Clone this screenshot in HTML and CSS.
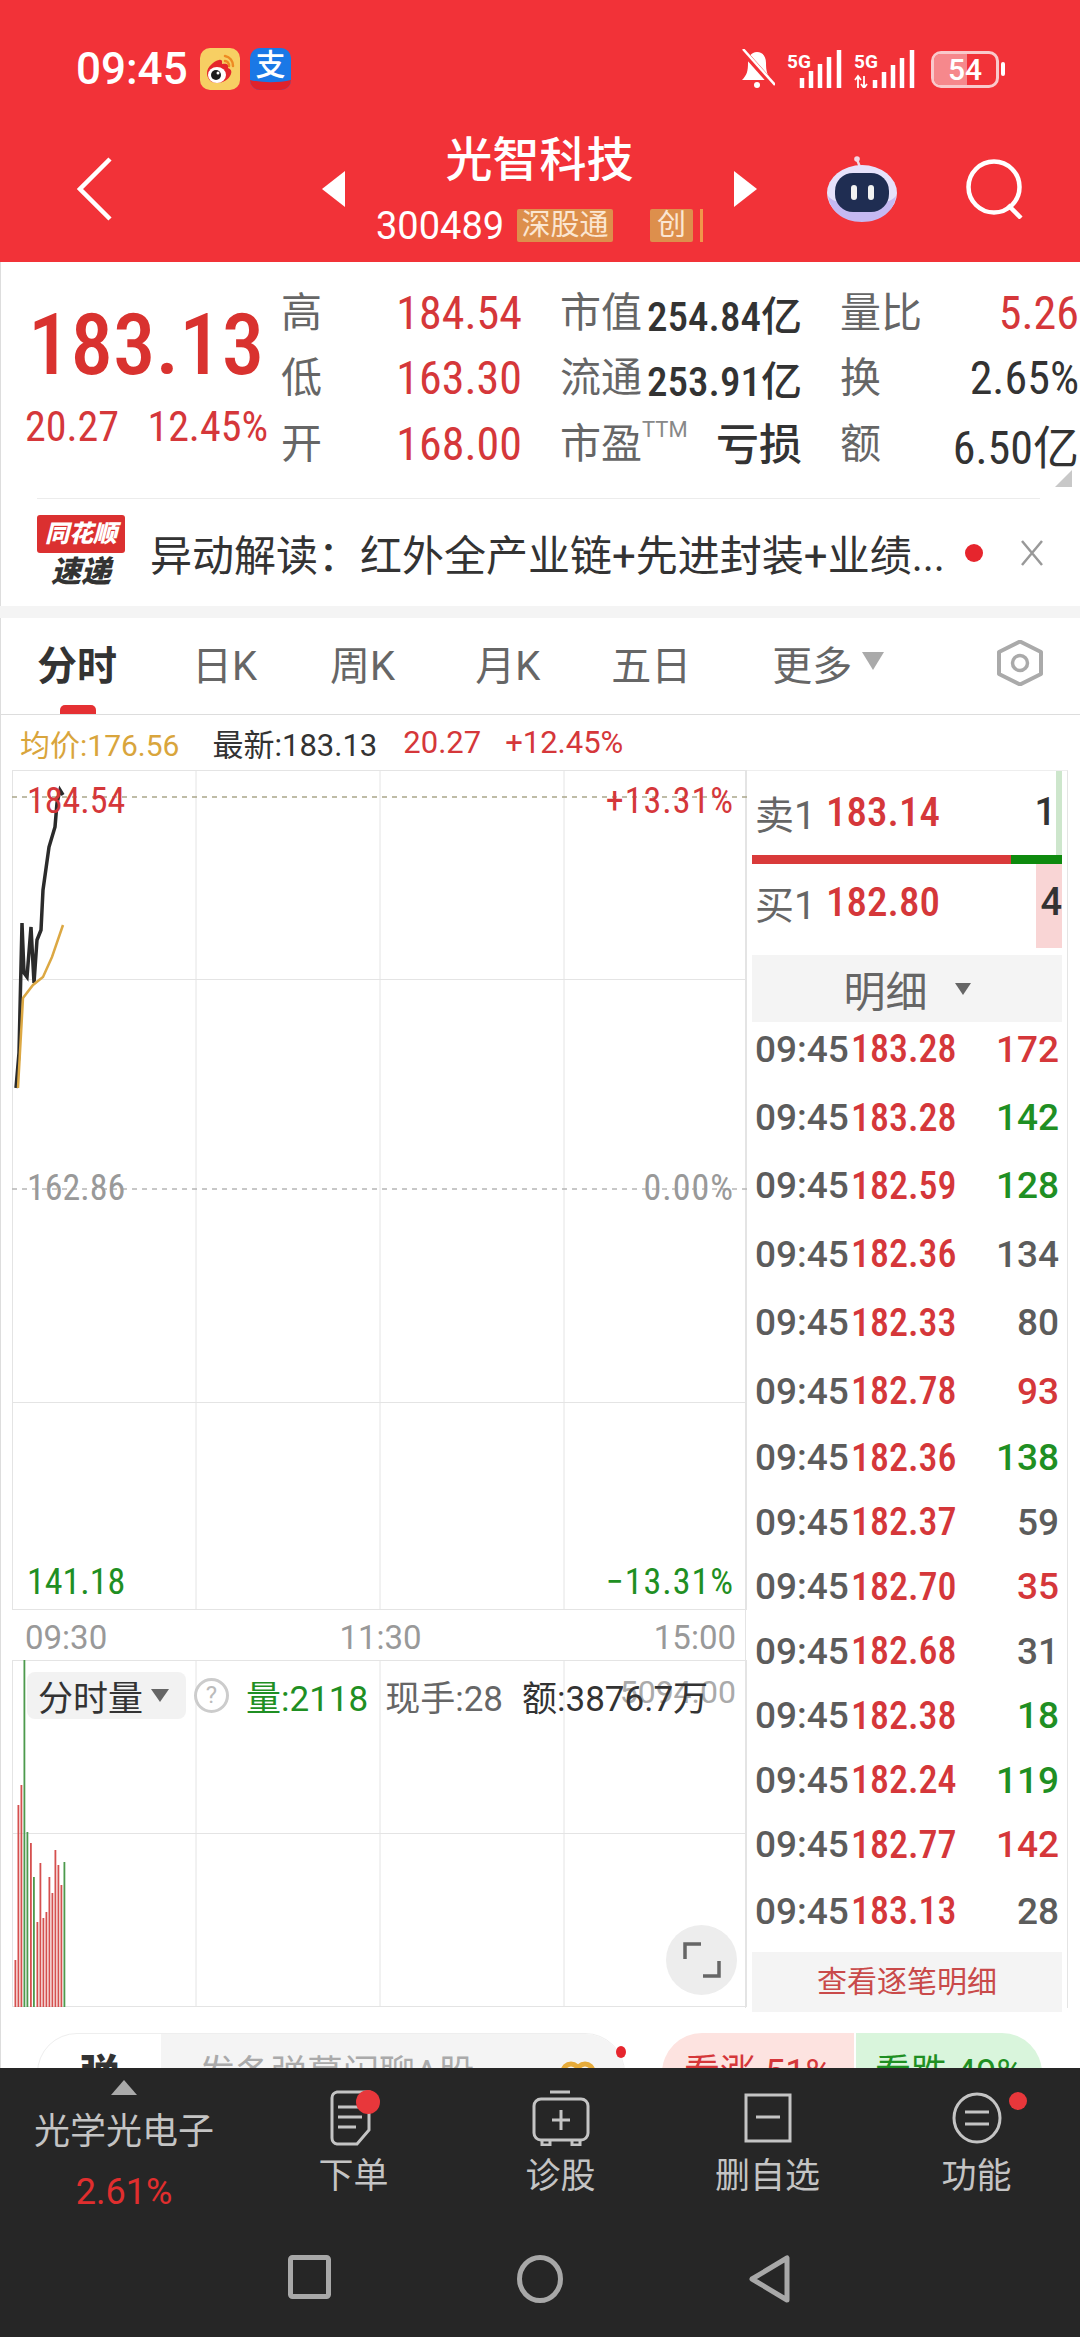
FILE: index.html
```html
<!DOCTYPE html>
<html lang="zh">
<head>
    <meta charset="UTF-8">
    <meta name="viewport" content="width=device-width, initial-scale=1.0">
    <title>光智科技</title>
    <link rel="stylesheet" href="styles.css">
</head>
<body>

<header class="header">
    <div class="status">
        <span class="clock">09:45</span>
        <svg class="app-icon weibo" viewBox="0 0 40 42">
            <rect width="40" height="42" rx="10" fill="#f7cf63"/>
            <path d="M25 8c5 1 8 5 8 10M25 13c2 0 4 2 4 5" fill="none" stroke="#ee8a22" stroke-width="2.5" stroke-linecap="round"/>
            <path d="M7 25c0-6 7-12 12-13 4-1 3 3 3 4 4-1 7 0 6 4 3 1 4 3 3 6-2 6-9 9-14 9-6 0-10-4-10-10z" fill="#e5262c"/>
            <ellipse cx="17" cy="27" rx="9" ry="8" fill="#fff"/>
            <circle cx="16" cy="27" r="5" fill="#1c1c1c"/>
            <circle cx="18" cy="25" r="1.5" fill="#fff"/>
        </svg>
        <svg class="app-icon alipay" viewBox="0 0 41 42">
            <rect width="41" height="42" rx="10" fill="#1a78e6"/>
            <path d="M0 32c12 3 29 3 41 0v0a10 10 0 0 1-10 10H10A10 10 0 0 1 0 32z" fill="#e0222c"/>
            <text x="20.5" y="27" text-anchor="middle" class="alipay-glyph">支</text>
        </svg>
        <div class="status-right">
            <svg class="bell" viewBox="0 0 36 40">
                <path d="M18 3c-6 0-9 5-9 11 0 8-1 12-6 17h30c-5-5-6-9-6-17 0-6-3-11-9-11z" fill="#fff"/>
                <circle cx="18" cy="36" r="3" fill="#fff"/>
                <path d="M3 1l31 35" stroke="#f23238" stroke-width="6"/>
                <path d="M4 0l32 36" stroke="#fff" stroke-width="2.5"/>
            </svg>
            <svg class="signal" viewBox="0 0 55 38">
                <text x="0" y="18" class="sig-text">5G</text>
                <path d="M15 38V28M24 38V21M33 38V14M42 38V7M52 38V0" stroke="#fff" stroke-width="4.5"/>
            </svg>
            <svg class="signal second" viewBox="0 0 61 38">
                <text x="0" y="18" class="sig-text">5G</text>
                <path d="M4 38V26M1 30l3-4 3 4M10 26v12M7 34l3 4 3-4" stroke="#fff" stroke-width="1.8" fill="none"/>
                <path d="M21 38V30M30 38V22M39 38V15M48 38V8M58 38V0" stroke="#fff" stroke-width="4.5"/>
            </svg>
            <div class="battery"><span class="battery-fill"></span><span class="battery-num">54</span></div>
            <span class="battery-tip"></span>
        </div>
    </div>
    <div class="nav">
        <svg class="nav-back" viewBox="0 0 35 64"><path d="M33 2L3 32l30 30" fill="none" stroke="#fff" stroke-width="4.5"/></svg>
        <span class="tri-left"></span>
        <div class="nav-mid">
            <div class="stock-name">光智科技</div>
            <div class="code-row">
                <span class="code">300489</span>
                <span class="tag tag-sgt">深股通</span>
                <span class="tag tag-chuang">创</span>
                <span class="tag-more"></span>
            </div>
        </div>
        <span class="tri-right"></span>
        <svg class="robot" viewBox="0 0 72 66">
            <path d="M34 12C33 7 31 5 31 3" stroke="#f3d8e4" stroke-width="2.5" fill="none"/>
            <circle cx="31" cy="3" r="2.8" fill="#f3d8e4"/>
            <ellipse cx="36" cy="37" rx="35" ry="28" fill="#e6e2fb"/>
            <path d="M2 40c2 14 14 26 34 26 19 0 32-11 34-26-8 12-60 12-68 0z" fill="#c5b9f2"/>
            <rect x="9" y="17" width="54" height="39" rx="18" fill="#1f2d52"/>
            <rect x="25" y="29" width="6" height="15" rx="3" fill="#f2f2f2"/>
            <rect x="42" y="29" width="6" height="15" rx="3" fill="#f2f2f2"/>
        </svg>
        <svg class="search" viewBox="0 0 59 60">
            <circle cx="28" cy="28" r="25.5" fill="none" stroke="#fff" stroke-width="4.5"/>
            <path d="M42 46l13 13" stroke="#fff" stroke-width="4.5"/>
        </svg>
    </div>
</header>

<div class="content">
    <section class="quote">
        <div class="price-box">
            <div class="price">183.13</div>
            <div class="change"><span>20.27</span><span>12.45%</span></div>
        </div>
        <div class="stats">
            <div class="stat"><span class="lbl">高</span><span class="val up">184.54</span></div>
            <div class="stat"><span class="lbl">市值</span><span class="val small">254.84亿</span></div>
            <div class="stat"><span class="lbl">量比</span><span class="val up">5.26</span></div>
            <div class="stat"><span class="lbl">低</span><span class="val up">163.30</span></div>
            <div class="stat"><span class="lbl">流通</span><span class="val small">253.91亿</span></div>
            <div class="stat"><span class="lbl">换</span><span class="val">2.65%</span></div>
            <div class="stat"><span class="lbl">开</span><span class="val up">168.00</span></div>
            <div class="stat"><span class="lbl">市盈<sup class="ttm">TTM</sup></span><span class="val loss">亏损</span></div>
            <div class="stat"><span class="lbl">额</span><span class="val">6.50亿</span></div>
        </div>
        <span class="corner"></span>
    </section>

    <section class="news">
        <div class="news-logo">
            <div class="logo-top">同花顺</div>
            <div class="logo-bottom">速递</div>
        </div>
        <div class="news-text">异动解读：红外全产业链+先进封装+业绩...</div>
        <span class="news-dot"></span>
        <svg class="news-close" viewBox="0 0 24 26"><path d="M2 1l20 24M22 1L2 25" stroke="#999" stroke-width="2.5"/></svg>
    </section>

    <nav class="tabs">
        <span class="tab active">分时</span>
        <span class="tab">日K</span>
        <span class="tab">周K</span>
        <span class="tab">月K</span>
        <span class="tab">五日</span>
        <span class="tab">更多<i class="tab-arrow"></i></span>
        <svg class="hex" viewBox="0 0 48 46">
            <path d="M24 1.5L45 12v22L24 44.5 3 34V12z" fill="none" stroke="#aaa" stroke-width="4" stroke-linejoin="round"/>
            <circle cx="24" cy="23" r="7.5" fill="none" stroke="#aaa" stroke-width="3.5"/>
        </svg>
    </nav>

    <div class="info">
        <span class="avg">均价:176.56</span>
        <span class="latest">最新:183.13</span>
        <span class="up">20.27</span>
        <span class="up">+12.45%</span>
    </div>

    <div class="main">
        <div class="charts">
            <div class="price-chart">
                <svg class="chart-svg" viewBox="12 770 735 840">
                    <path class="grid" d="M12.5 770V1610M196 770V1610M380 770V1610M564 770V1610M746.5 770V1610M12 770.5H747M12 979.5H747M12 1402.5H747M12 1609.5H747"/>
                    <path d="M12 797H747" stroke="#aaa68a" stroke-width="1.5" stroke-dasharray="5 5"/>
                    <path d="M12 1189H747" stroke="#b5b5b5" stroke-width="1.5" stroke-dasharray="5 5"/>
                    <polyline points="16,1088 19,1053 22,923 24,973 27,977 31,927 34,983 37,940 41,930 43,890 49,847 55,827 57,803 60,790 63,795" fill="none" stroke="#2b2b2b" stroke-width="3.5"/>
                    <polyline points="18,1088 23,998 33,985 43,977 52,957 63,925" fill="none" stroke="#dca843" stroke-width="2.5"/>
                </svg>
                <span class="ch-label ch-l1 up">184.54</span>
                <span class="ch-label ch-r1 up">+13.31%</span>
                <span class="ch-label ch-l2 muted">162.86</span>
                <span class="ch-label ch-r2 muted">0.00%</span>
                <span class="ch-label ch-l3 down">141.18</span>
                <span class="ch-label ch-r3 down">−13.31%</span>
            </div>
            <div class="time-axis"><span>09:30</span><span>11:30</span><span>15:00</span></div>
            <div class="vol-chart">
                <svg class="chart-svg" viewBox="12 1660 735 347">
                    <path class="grid" d="M12.5 1660V2007M196 1660V2007M380 1660V2007M564 1660V2007M746.5 1660V2007M12 1660.5H747M12 1833.5H747M12 2006.5H747"/>
                    <g class="bar-red">
                        <rect x="14.5" y="1960" width="1.8" height="47"/>
                        <rect x="17.5" y="1805" width="1.8" height="202"/>
                        <rect x="20.5" y="1785" width="1.8" height="222"/>
                        <rect x="30" y="1843" width="1.8" height="164"/>
                        <rect x="36.5" y="1922" width="1.8" height="85"/>
                        <rect x="39.5" y="1863" width="1.8" height="144"/>
                        <rect x="42.5" y="1918" width="1.8" height="89"/>
                        <rect x="45.5" y="1912" width="1.8" height="95"/>
                        <rect x="48.5" y="1877" width="1.8" height="130"/>
                        <rect x="51.5" y="1893" width="1.8" height="114"/>
                        <rect x="54.5" y="1850" width="1.8" height="157"/>
                        <rect x="57.5" y="1865" width="1.8" height="142"/>
                        <rect x="60.5" y="1885" width="1.8" height="122"/>
                    </g>
                    <g class="bar-green">
                        <rect x="23.5" y="1660" width="1.8" height="347"/>
                        <rect x="26.5" y="1832" width="1.8" height="175"/>
                        <rect x="33" y="1877" width="1.8" height="130"/>
                        <rect x="63.5" y="1862" width="1.8" height="145"/>
                    </g>
                </svg>
                <span class="vol-max">5094.00</span>
                <div class="vol-head">
                    <span class="vol-chip">分时量<i class="chip-arrow"></i></span>
                    <span class="help">?</span>
                    <span class="vol-a down">量:2118</span>
                    <span class="vol-b">现手:28</span>
                    <span class="vol-c">额:3876.7万</span>
                </div>
                <div class="expand">
                    <svg viewBox="0 0 38 36"><path d="M18 2H2v15M20 34h16V19" fill="none" stroke="#666" stroke-width="3.5"/></svg>
                </div>
            </div>
        </div>

        <aside class="side">
            <div class="book sell">
                <span class="book-lbl">卖1</span><span class="book-price">183.14</span><span class="book-vol">1</span>
                <span class="book-bar green-bar"></span>
            </div>
            <div class="ratio"><span class="ratio-red"></span><span class="ratio-green"></span></div>
            <div class="book buy">
                <span class="book-lbl">买1</span><span class="book-price">182.80</span><span class="book-vol">4</span>
                <span class="book-bar red-bar"></span>
            </div>
            <div class="detail-head">明细<i class="detail-arrow"></i></div>
            <div class="ticks">
                <div class="tick tall"><span class="t">09:45</span><span class="p">183.28</span><span class="v up">172</span></div>
                <div class="tick tall"><span class="t">09:45</span><span class="p">183.28</span><span class="v down">142</span></div>
                <div class="tick tall"><span class="t">09:45</span><span class="p">182.59</span><span class="v down">128</span></div>
                <div class="tick tall"><span class="t">09:45</span><span class="p">182.36</span><span class="v">134</span></div>
                <div class="tick tall"><span class="t">09:45</span><span class="p">182.33</span><span class="v">80</span></div>
                <div class="tick tall"><span class="t">09:45</span><span class="p">182.78</span><span class="v up">93</span></div>
                <div class="tick"><span class="t">09:45</span><span class="p">182.36</span><span class="v down">138</span></div>
                <div class="tick"><span class="t">09:45</span><span class="p">182.37</span><span class="v">59</span></div>
                <div class="tick"><span class="t">09:45</span><span class="p">182.70</span><span class="v up">35</span></div>
                <div class="tick"><span class="t">09:45</span><span class="p">182.68</span><span class="v">31</span></div>
                <div class="tick"><span class="t">09:45</span><span class="p">182.38</span><span class="v down">18</span></div>
                <div class="tick"><span class="t">09:45</span><span class="p">182.24</span><span class="v down">119</span></div>
                <div class="tick"><span class="t">09:45</span><span class="p">182.77</span><span class="v up">142</span></div>
                <div class="tick tall"><span class="t">09:45</span><span class="p">183.13</span><span class="v">28</span></div>
            </div>
            <div class="detail-btn">查看逐笔明细</div>
        </aside>
    </div>

    <div class="peek">
        <div class="danmu">
            <span class="danmu-tag">弹</span>
            <span class="danmu-input">发条弹幕闲聊A股</span>
            <svg class="danmu-gift" viewBox="0 0 36 30">
                <circle cx="11" cy="12" r="8" fill="none" stroke="#e6ab3a" stroke-width="5"/>
                <circle cx="25" cy="12" r="8" fill="none" stroke="#e6ab3a" stroke-width="5"/>
            </svg>
            <span class="danmu-dot"></span>
        </div>
        <div class="vote">
            <span class="vote-up">看涨 51%</span>
            <span class="vote-down">看跌 49%</span>
        </div>
    </div>
</div>

<footer class="bottom">
    <div class="actions">
        <div class="sector">
            <span class="sector-arrow"></span>
            <span class="sector-name">光学光电子</span>
            <span class="sector-pct">2.61%</span>
        </div>
        <div class="action">
            <div class="action-icon">
                <svg viewBox="0 0 52 56" width="52" height="56">
                    <path d="M8 2h32v38l-12 14H8a6 6 0 0 1-5-6V8a6 6 0 0 1 5-6z" transform="translate(1 0)" fill="none" stroke="#c4c4c4" stroke-width="3"/>
                    <path d="M10 17h24M10 27h24M10 37h18" stroke="#c4c4c4" stroke-width="3"/>
                </svg>
                <span class="red-dot dot-order"></span>
            </div>
            <span class="action-name">下单</span>
        </div>
        <div class="action">
            <div class="action-icon">
                <svg viewBox="0 0 58 56" width="58" height="56">
                    <path d="M18 2h20" stroke="#c4c4c4" stroke-width="3"/>
                    <rect x="2" y="9" width="54" height="41" rx="7" fill="none" stroke="#c4c4c4" stroke-width="3"/>
                    <path d="M29 20v20M20 30h18" stroke="#c4c4c4" stroke-width="3"/>
                    <path d="M10 50v5h8v-5M40 50v5h8v-5" fill="none" stroke="#c4c4c4" stroke-width="3"/>
                </svg>
            </div>
            <span class="action-name">诊股</span>
        </div>
        <div class="action">
            <div class="action-icon">
                <svg viewBox="0 0 48 50" width="48" height="50">
                    <rect x="2" y="2" width="44" height="46" fill="none" stroke="#c4c4c4" stroke-width="3"/>
                    <path d="M12 24h24" stroke="#c4c4c4" stroke-width="3"/>
                </svg>
            </div>
            <span class="action-name">删自选</span>
        </div>
        <div class="action">
            <div class="action-icon">
                <svg viewBox="0 0 50 52" width="50" height="52">
                    <ellipse cx="25" cy="26" rx="23" ry="24" fill="none" stroke="#c4c4c4" stroke-width="3"/>
                    <path d="M13 20h24M13 32h24" stroke="#c4c4c4" stroke-width="3"/>
                </svg>
                <span class="red-dot dot-func"></span>
            </div>
            <span class="action-name">功能</span>
        </div>
    </div>
    <div class="sysnav">
        <svg viewBox="0 0 43 44" width="43" height="44"><rect x="2.5" y="2.5" width="38" height="39" rx="2" fill="none" stroke="#a8a8a8" stroke-width="5"/></svg>
        <svg viewBox="0 0 46 48" width="46" height="48"><ellipse cx="23" cy="24" rx="20.5" ry="21.5" fill="none" stroke="#a8a8a8" stroke-width="5"/></svg>
        <svg viewBox="0 0 41 48" width="41" height="48"><path d="M38 3v42L3 24z" fill="none" stroke="#a8a8a8" stroke-width="5" stroke-linejoin="round"/></svg>
    </div>
</footer>

</body>
</html>
```

FILE: styles.css
```css
* {
    box-sizing: border-box;
}
html, body {
    margin: 0;
    padding: 0;
}
body {
    width: 1080px;
    height: 2337px;
    overflow: hidden;
    background: #fff;
    font-family: Roboto, "Noto Sans CJK SC", sans-serif;
    color: #333;
}
i {
    display: block;
}
svg {
    display: block;
    flex: none;
}

.up { color: #d5373a; }
.down { color: #1f8f23; }
.muted { color: #999; }

/* red header */
.header {
    height: 262px;
    background: #f23238;
    color: #fff;
    padding-top: 48px;
}
.status {
    display: flex;
    align-items: center;
    height: 42px;
    padding-left: 76px;
}
.clock {
    font-size: 44px;
    font-weight: 500;
    width: 124px;
}
.app-icon {
    width: 40px;
    height: 42px;
}
.alipay {
    width: 41px;
    margin-left: 10px;
}
.alipay-glyph {
    font-size: 30px;
    font-weight: 500;
    fill: #fff;
}
.status-right {
    display: flex;
    align-items: center;
    margin-left: auto;
    padding-right: 75px;
}
.bell {
    width: 36px;
    height: 40px;
}
.signal {
    width: 55px;
    height: 38px;
    margin-left: 12px;
}
.signal.second {
    width: 61px;
}
.sig-text {
    font-size: 19px;
    font-weight: 700;
    fill: #fff;
}
.battery {
    position: relative;
    width: 68px;
    height: 37px;
    margin-left: 16px;
    border: 3px solid #f9c9cb;
    border-radius: 10px;
    text-align: center;
}
.battery-fill {
    position: absolute;
    left: 0;
    top: 0;
    bottom: 0;
    width: 54%;
    border-radius: 6px 0 0 6px;
    background: #f6888c;
}
.battery-num {
    position: relative;
    display: block;
    font-size: 30px;
    font-weight: 500;
    line-height: 31px;
    color: #fff;
}
.battery-tip {
    width: 4px;
    height: 14px;
    margin-left: 2px;
    background: #fff;
    border-radius: 2px;
}
.nav {
    display: flex;
    align-items: center;
    margin-top: 45px;
    padding-left: 77px;
}
.nav-back {
    width: 35px;
    height: 64px;
}
.tri-left,
.tri-right {
    width: 0;
    height: 0;
    border-top: 18px solid transparent;
    border-bottom: 18px solid transparent;
}
.tri-left {
    margin-left: 210px;
    border-right: 23px solid #fff;
}
.tri-right {
    border-left: 23px solid #fff;
}
.nav-mid {
    width: 389px;
    display: flex;
    flex-direction: column;
    align-items: center;
}
.stock-name {
    font-size: 47px;
    font-weight: 500;
    line-height: 54px;
    margin-top: -2px;
    margin-bottom: 2px;
}
.code-row {
    display: flex;
    align-items: center;
    margin-top: 20px;
    height: 33px;
}
.code {
    font-size: 38px;
    width: 141px;
}
.tag {
    height: 33px;
    line-height: 32px;
    font-size: 29px;
    text-align: center;
    background: #dd8f4c;
    color: #fbe6d2;
    border-radius: 2px;
}
.tag-sgt {
    width: 96px;
}
.tag-chuang {
    width: 43px;
    margin-left: 37px;
}
.tag-more {
    width: 3px;
    height: 33px;
    margin-left: 7px;
    background: #f0964a;
}
.robot {
    width: 72px;
    height: 66px;
    margin-left: 69px;
}
.search {
    width: 59px;
    height: 60px;
    margin-left: 68px;
}

/* quote panel */
.content {
    background: #fff;
    box-shadow: inset 1px 0 #ddd;
    height: 1806px;
    overflow: hidden;
}
.quote {
    position: relative;
    display: flex;
    height: 237px;
    padding: 18px 0 0 25px;
}
.quote::after {
    content: "";
    position: absolute;
    left: 37px;
    right: 40px;
    bottom: 0;
    border-bottom: 1px solid #ececec;
}
.price-box {
    width: 256px;
    flex: none;
}
.price {
    margin: 32px 0 0 3px;
    font-size: 85px;
    font-stretch: 75%;
    font-weight: 500;
    line-height: 66px;
    color: #d9322f;
    white-space: nowrap;
}
.change {
    display: flex;
    justify-content: space-between;
    width: 243px;
    margin-top: 24px;
    font-size: 42px;
    font-stretch: 75%;
    color: #d5373a;
}
.stats {
    display: grid;
    grid-template-columns: 241px 242px 239px;
    grid-auto-rows: 65.5px;
    column-gap: 38px;
    flex: none;
}
.stat {
    display: flex;
    justify-content: space-between;
    align-items: center;
}
.lbl {
    position: relative;
    margin-bottom: 8px;
    font-size: 41px;
    color: #666;
    white-space: nowrap;
}
.ttm {
    position: absolute;
    font-size: 22px;
    line-height: 22px;
    top: 9px;
    color: #888;
}
.val {
    font-size: 46px;
    font-stretch: 75%;
    white-space: nowrap;
}
.val.small {
    font-size: 41px;
    font-weight: 500;
}
.val.loss {
    margin-bottom: 6px;
    font-size: 43px;
    font-weight: 500;
}
.corner {
    position: absolute;
    left: 1055px;
    top: 208px;
    width: 0;
    height: 0;
    border-left: 17px solid transparent;
    border-bottom: 17px solid #c8c8c8;
}

/* news row */
.news {
    display: flex;
    align-items: center;
    height: 107px;
    padding-left: 37px;
}
.news-logo {
    width: 88px;
    flex: none;
    text-align: center;
    font-style: italic;
    font-weight: 900;
}
.logo-top {
    height: 38px;
    background: #db3030;
    color: #fff;
    font-size: 24px;
    line-height: 38px;
    border-radius: 3px;
    white-space: nowrap;
}
.logo-bottom {
    margin-top: 1px;
    font-size: 30px;
    line-height: 36px;
    color: #333;
}
.news-text {
    width: 815px;
    margin-left: 25px;
    flex: none;
    font-size: 42px;
    color: #333;
    white-space: nowrap;
}
.news-dot {
    width: 18px;
    height: 18px;
    flex: none;
    border-radius: 50%;
    background: #e6252d;
}
.news-close {
    width: 24px;
    height: 26px;
    margin-left: 37px;
}

/* tabs */
.tabs {
    position: relative;
    display: flex;
    align-items: center;
    height: 109px;
    padding: 0 36px 6px 37px;
    border-top: 12px solid #f4f4f4;
    border-bottom: 1px solid #ddd;
}
.tab {
    display: flex;
    font-size: 40px;
    color: #666;
    margin-right: 73px;
    white-space: nowrap;
}
.tab.active {
    margin-right: 75px;
    font-weight: 700;
    color: #333;
}
.tab:nth-child(3) { margin-right: 80px; }
.tab:nth-child(4) { margin-right: 71px; }
.tab:nth-child(5) { margin-right: 81px; }
.tab.active::after {
    content: "";
    position: absolute;
    left: 60px;
    bottom: 0;
    width: 36px;
    height: 9px;
    border-radius: 5px 5px 0 0;
    background: #e53033;
}
.tab-arrow {
    width: 0;
    height: 0;
    margin: 18px 0 0 10px;
    border-left: 11px solid transparent;
    border-right: 11px solid transparent;
    border-top: 18px solid #aaa;
}
.hex {
    width: 48px;
    height: 46px;
    margin-left: auto;
}
.info {
    display: flex;
    align-items: center;
    height: 55px;
    padding-left: 20px;
    font-size: 31px;
}
.info span {
    margin-right: 24px;
    white-space: nowrap;
}
.info .avg {
    margin-right: 33px;
    font-size: 30px;
    color: #d9a53c;
}
.info .latest {
    margin-right: 26px;
    color: #333;
}

/* chart + side column */
.main {
    display: flex;
    height: 1238px;
    padding-left: 12px;
}
.charts {
    width: 735px;
    flex: none;
}
.price-chart,
.vol-chart {
    position: relative;
}
.price-chart { height: 840px; }
.vol-chart { height: 347px; }
.chart-svg {
    width: 735px;
    height: 100%;
}
.grid {
    fill: none;
    stroke: #e4e4e4;
    stroke-width: 1;
}
.bar-red rect { fill: #d5504f; }
.bar-green rect { fill: #4d9a4d; }
.ch-label {
    position: absolute;
    font-size: 36px;
    font-stretch: 75%;
    line-height: 36px;
}
.ch-l1 { left: 15px; top: 13px; }
.ch-r1 { right: 13px; top: 13px; letter-spacing: 1px; }
.ch-l2 { left: 15px; top: 400px; }
.ch-r2 { right: 13px; top: 400px; letter-spacing: 1px; }
.ch-l3 { left: 15px; bottom: 10px; }
.ch-r3 { right: 13px; bottom: 10px; letter-spacing: 1px; }
.time-axis {
    display: flex;
    justify-content: space-between;
    align-items: center;
    height: 50px;
    padding: 4px 11px 0 13px;
    font-size: 33px;
    color: #999;
}
.vol-head {
    position: absolute;
    left: 15px;
    top: 12px;
    display: flex;
    align-items: center;
    height: 47px;
    white-space: nowrap;
}
.vol-chip {
    display: flex;
    align-items: center;
    width: 159px;
    height: 47px;
    padding-left: 11px;
    border-radius: 8px;
    background: #f2f2f2;
    font-size: 35px;
    color: #333;
}
.chip-arrow {
    width: 0;
    height: 0;
    margin-left: 8px;
    border-left: 9px solid transparent;
    border-right: 9px solid transparent;
    border-top: 13px solid #666;
}
.help {
    width: 35px;
    height: 35px;
    margin-left: 8px;
    border: 3px solid #ccc;
    border-radius: 50%;
    font-size: 24px;
    line-height: 29px;
    text-align: center;
    color: #bbb;
}
.vol-a,
.vol-b,
.vol-c {
    font-size: 35px;
}
.vol-a { margin-left: 17px; }
.vol-b { margin-left: 17px; color: #666; }
.vol-c { margin-left: 19px; color: #333; }
.vol-max {
    position: absolute;
    right: 11px;
    top: 13px;
    font-size: 32px;
    color: #aaa;
}
.expand {
    position: absolute;
    left: 654px;
    top: 265px;
    display: flex;
    align-items: center;
    justify-content: center;
    width: 71px;
    height: 70px;
    border-radius: 50%;
    background: #ededed;
}
.expand svg {
    width: 38px;
    height: 36px;
}
.side {
    width: 323px;
    flex: none;
    margin-left: -2px;
    padding: 0 5px 0 6px;
    border-left: 1px solid #e4e4e4;
    border-right: 1px solid #e4e4e4;
    border-top: 1px solid #eee;
}
.book {
    position: relative;
    display: flex;
    align-items: center;
    height: 84px;
    padding-left: 3px;
}
.sell {
    padding-bottom: 3px;
}
.buy {
    padding-bottom: 8px;
}
.book-lbl {
    width: 71px;
    font-size: 39px;
    color: #666;
}
.book-price {
    font-size: 41px;
    font-stretch: 75%;
    font-weight: 500;
    color: #d5373a;
}
.book-vol {
    position: relative;
    z-index: 1;
    margin-left: auto;
    padding-right: 6px;
    font-size: 38px;
    font-weight: 500;
    color: #333;
}
.buy .book-vol {
    padding-right: 0;
}
.book-bar {
    position: absolute;
    right: 0;
    top: 0;
    bottom: 0;
}
.green-bar {
    width: 6px;
    background: #cde6cc;
}
.red-bar {
    width: 26px;
    background: #f9d5d5;
}
.ratio {
    display: flex;
    height: 9px;
}
.ratio-red {
    width: 259px;
    background: #d93a3a;
}
.ratio-green {
    flex: 1;
    background: #0e8a0e;
}
.detail-head {
    display: flex;
    align-items: center;
    justify-content: center;
    height: 67px;
    margin-top: 7px;
    background: #f4f4f4;
    font-size: 42px;
    color: #666;
}
.detail-arrow {
    width: 0;
    height: 0;
    margin-left: 27px;
    border-left: 8px solid transparent;
    border-right: 8px solid transparent;
    border-top: 12px solid #666;
}
.ticks {
    margin-top: -7px;
}
.tick {
    display: flex;
    align-items: center;
    height: 64.5px;
    font-size: 37px;
    font-weight: 500;
    padding: 0 3px;
}
.tick.tall {
    height: 68.4px;
}
.t {
    width: 96px;
    color: #5c5c5c;
}
.p {
    font-size: 38px;
    font-stretch: 75%;
    color: #d5373a;
}
.v {
    margin-left: auto;
    color: #5c5c5c;
}
.v.up { color: #d5373a; }
.v.down { color: #1f8f23; }
.detail-btn {
    height: 60px;
    margin-top: 7px;
    background: #f4f4f4;
    text-align: center;
    line-height: 60px;
    font-size: 30px;
    color: #c94a4a;
}

/* half hidden row above the dark bar */
.peek {
    display: flex;
    height: 36px;
    margin-top: 25px;
    padding-left: 37px;
    overflow: hidden;
}
.danmu {
    position: relative;
    display: flex;
    width: 588px;
    height: 80px;
    flex: none;
    border: 1px solid #eee;
    border-radius: 40px;
}
.danmu-tag {
    width: 123px;
    flex: none;
    padding-top: 8px;
    text-align: center;
    font-size: 40px;
    font-weight: 900;
    color: #333;
}
.danmu-input {
    flex: 1;
    padding: 10px 0 0 38px;
    background: #f4f4f4;
    border-radius: 0 40px 40px 0;
    font-size: 36px;
    color: #aaa;
}
.danmu-gift {
    position: absolute;
    left: 522px;
    top: 26px;
    width: 36px;
    height: 30px;
}
.danmu-dot {
    position: absolute;
    left: 578px;
    top: 12px;
    width: 10px;
    height: 12px;
    border-radius: 50%;
    background: #e6252d;
}
.vote {
    display: flex;
    width: 380px;
    height: 80px;
    margin-left: 37px;
    flex: none;
    border-radius: 40px 40px 0 0;
    overflow: hidden;
    font-size: 36px;
}
.vote span {
    padding-top: 10px;
    text-align: center;
    white-space: nowrap;
}
.vote-up {
    width: 193px;
    background: #fde3e0;
    color: #d5373a;
}
.vote-down {
    width: 187px;
    margin-left: 2px;
    background: #d9f5dc;
    color: #1f8f23;
}

/* dark bottom bar */
.bottom {
    height: 269px;
    background: #262626;
    color: #c4c4c4;
}
.actions {
    display: flex;
    height: 187px;
    padding-left: 9px;
}
.sector {
    display: flex;
    flex-direction: column;
    align-items: center;
    width: 230px;
    margin-right: 11px;
    padding-top: 12px;
}
.sector-arrow {
    width: 0;
    height: 0;
    border-left: 13px solid transparent;
    border-right: 13px solid transparent;
    border-bottom: 15px solid #aaa;
}
.sector-name {
    margin-top: 12px;
    font-size: 36px;
    line-height: 50px;
}
.sector-pct {
    margin-top: 10px;
    font-size: 36px;
    line-height: 50px;
    color: #e02e2e;
}
.action {
    display: flex;
    flex-direction: column;
    align-items: center;
    width: 207px;
    padding-top: 22px;
}
.action:last-child {
    margin-left: 2px;
}
.action-icon {
    position: relative;
    display: flex;
    align-items: center;
    height: 56px;
}
.action-name {
    margin-top: 6px;
    font-size: 35px;
    line-height: 50px;
}
.red-dot {
    position: absolute;
    border-radius: 50%;
    background: #e8373b;
}
.dot-order {
    left: 28px;
    top: 0;
    width: 24px;
    height: 24px;
}
.dot-func {
    left: 57px;
    top: 2px;
    width: 18px;
    height: 18px;
}
.sysnav {
    display: flex;
    align-items: flex-start;
    gap: 186px;
    padding-left: 288px;
}
```
